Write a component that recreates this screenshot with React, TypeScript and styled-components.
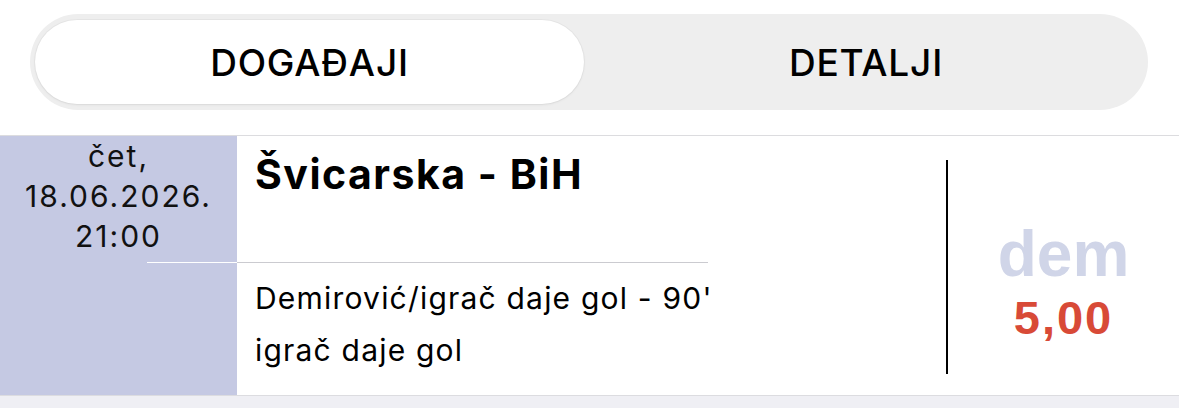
import { createGlobalStyle, styled } from "styled-components";

const Global = createGlobalStyle`
    html, body {
        margin: 0;
        padding: 0;
        background: #ffffff;
    }
    body {
        font-family: Inter, "Noto Sans", "Liberation Sans", sans-serif;
        color: #000;
    }
`

const Page = styled.div`
    width: 1179px;
    display: flex;
    flex-direction: column;
`

const Header = styled.div`
    height: 136px;
    padding: 14px 31px 0 30px;
    box-sizing: border-box;
    border-bottom: 1px solid #dcdcdf;
`

const Segmented = styled.div`
    height: 96px;
    border-radius: 48px;
    background: #eeeeee;
    padding: 6px 5px;
    box-sizing: border-box;
    display: grid;
    grid-template-columns: 1fr 1fr;
`

const Segment = styled.div<{ $active?: boolean }>`
    display: flex;
    align-items: center;
    justify-content: center;
    border-radius: 42px;
    margin-right: ${p => p.$active ? "5px" : "0"};
    background: ${p => p.$active ? "#ffffff" : "transparent"};
    box-shadow: ${p => p.$active ? "0 0 0 1px rgba(0,0,0,0.03), 0 1px 3px rgba(0,0,0,0.06)" : "none"};
    font-size: 37px;
    font-weight: 500;
    letter-spacing: 0.8px;
    color: #000;
`

const Row = styled.div`
    display: flex;
    height: 259px;
    border-bottom: 1px solid #dcdce0;
`

const DateCell = styled.div`
    width: 237px;
    flex-shrink: 0;
    background: #c5c9e3;
    display: flex;
    flex-direction: column;
    align-items: center;
    font-size: 30px;
    line-height: 40px;
    letter-spacing: 2px;
    color: #111;
`

const Main = styled.div`
    flex: 1;
    display: flex;
    flex-direction: column;
`

const Title = styled.div`
    height: 126px;
    box-sizing: border-box;
    padding: 14px 0 0 18px;
    font-size: 41px;
    line-height: 48px;
    letter-spacing: 1.5px;
    font-weight: 700;
`

const Separator = styled.div`
    height: 1px;
    width: 561px;
    margin-left: -90px;
    background: linear-gradient(to right, #ffffff 0 90px, #cbcbd0 90px 100%);
`

const Desc = styled.div`
    padding: 9px 0 0 18px;
    font-size: 30px;
    line-height: 52px;
    letter-spacing: 1.2px;
    color: #000;
`

const VLine = styled.div`
    width: 2px;
    flex-shrink: 0;
    background: #000;
    margin: 24px 0 21px;
`

const OddsCell = styled.div`
    width: 231px;
    flex-shrink: 0;
    display: flex;
    flex-direction: column;
    align-items: center;
    padding-top: 88px;
    box-sizing: border-box;
    font-family: "Liberation Sans", Arial, sans-serif;
    font-weight: 700;
`

const Tip = styled.div`
    font-size: 64px;
    line-height: 60px;
    color: #d0d5e8;
`

const Odd = styled.div`
    margin-top: 6px;
    font-size: 47px;
    line-height: 56px;
    letter-spacing: 2px;
    color: #d84a37;
`

const Footer = styled.div`
    height: 12px;
    background: #efeff4;
`

export default function App() {
    return (
        <Page>
            <Global />
            <Header>
                <Segmented>
                    <Segment $active>DOGAĐAJI</Segment>
                    <Segment>DETALJI</Segment>
                </Segmented>
            </Header>
            <Row>
                <DateCell>
                    <span>čet,</span>
                    <span>18.06.2026.</span>
                    <span>21:00</span>
                </DateCell>
                <Main>
                    <Title>Švicarska - BiH</Title>
                    <Separator />
                    <Desc>
                        <div>Demirović/igrač daje gol - 90'</div>
                        <div>igrač daje gol</div>
                    </Desc>
                </Main>
                <VLine />
                <OddsCell>
                    <Tip>dem</Tip>
                    <Odd>5,00</Odd>
                </OddsCell>
            </Row>
            <Footer />
        </Page>
    )
}
